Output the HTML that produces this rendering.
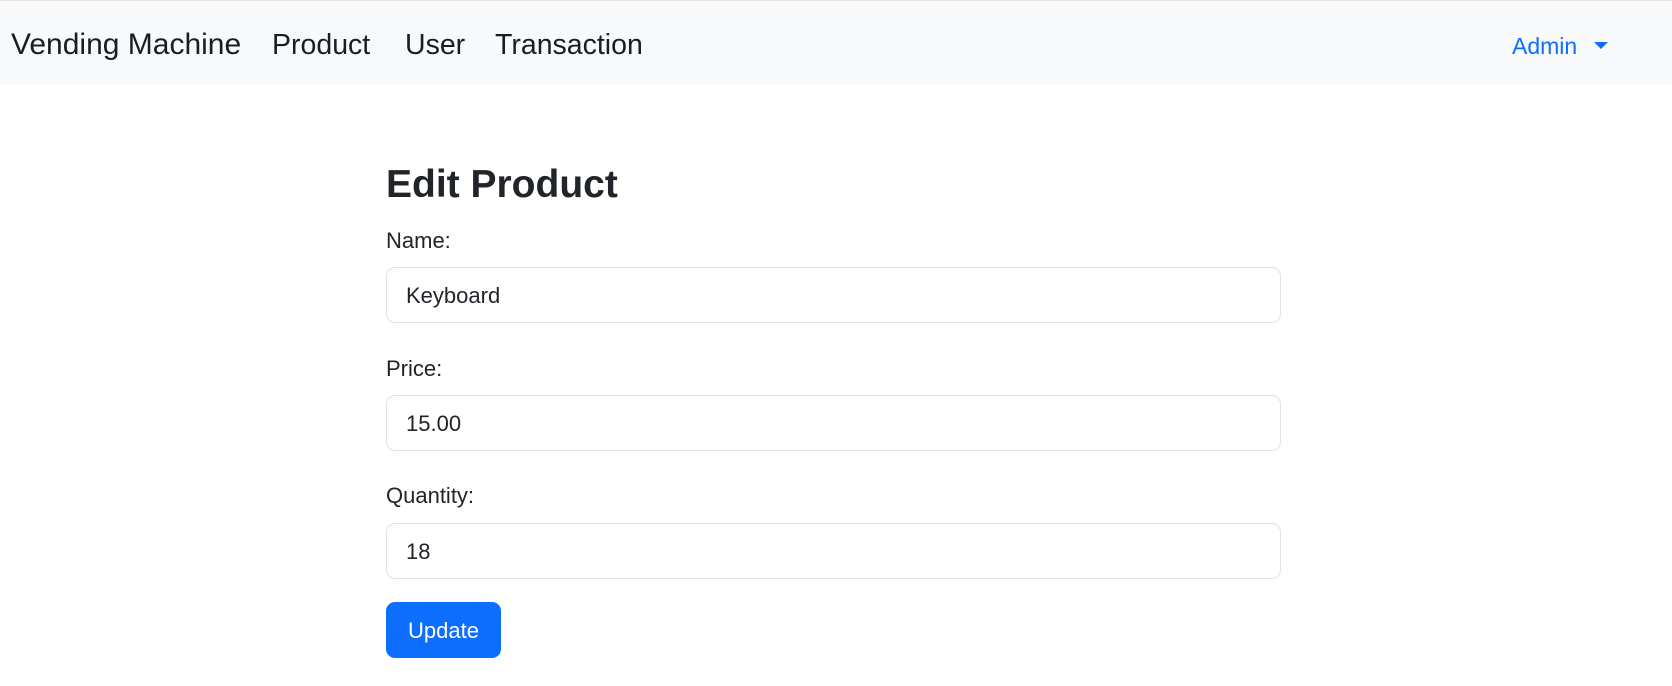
<!DOCTYPE html>
<html><head><meta charset="utf-8"><style>
*{box-sizing:border-box;margin:0;padding:0}
body{width:1672px;height:686px;background:#fff;font-family:"Liberation Sans",Arial,sans-serif;color:#212529;position:relative;overflow:hidden}
.nav{position:absolute;left:0;top:0;width:1672px;height:85px;background:#f8f9fa;border-top:1px solid #e6e2dc}
.n{position:absolute;top:27px;font-size:28.5px;line-height:34px;color:#1b1e21;white-space:nowrap}
.admin{position:absolute;left:1512px;top:31px;font-size:23px;line-height:28px;color:#0d6efd}
.caret{position:absolute;left:1594px;top:41px;width:0;height:0;border-left:7px solid transparent;border-right:7px solid transparent;border-top:7px solid #0d6efd}
h2{position:absolute;left:386px;top:160px;font-size:39px;line-height:50px;font-weight:bold}
.lbl{position:absolute;left:386px;font-size:22px;line-height:28px}
.inp{position:absolute;left:386px;width:895px;height:56px;border:1px solid #dee2e6;border-radius:9px;padding-left:19px;font-size:22px;line-height:56px}
.btn{position:absolute;left:386px;top:602px;width:115px;height:56px;background:#0d6efd;border-radius:9px;color:#fff;font-size:22px;line-height:57px;text-align:center}
</style></head><body>
<div class="nav">
<div class="n" style="left:11px;font-size:30px">Vending Machine</div>
<div class="n" style="left:272px">Product</div>
<div class="n" style="left:405px">User</div>
<div class="n" style="left:495px">Transaction</div>
<div class="admin">Admin</div><div class="caret"></div>
</div>
<h2>Edit Product</h2>
<div class="lbl" style="top:227px">Name:</div>
<div class="inp" style="top:267px">Keyboard</div>
<div class="lbl" style="top:355px">Price:</div>
<div class="inp" style="top:395px">15.00</div>
<div class="lbl" style="top:482px">Quantity:</div>
<div class="inp" style="top:523px">18</div>
<div class="btn">Update</div>
</body></html>
